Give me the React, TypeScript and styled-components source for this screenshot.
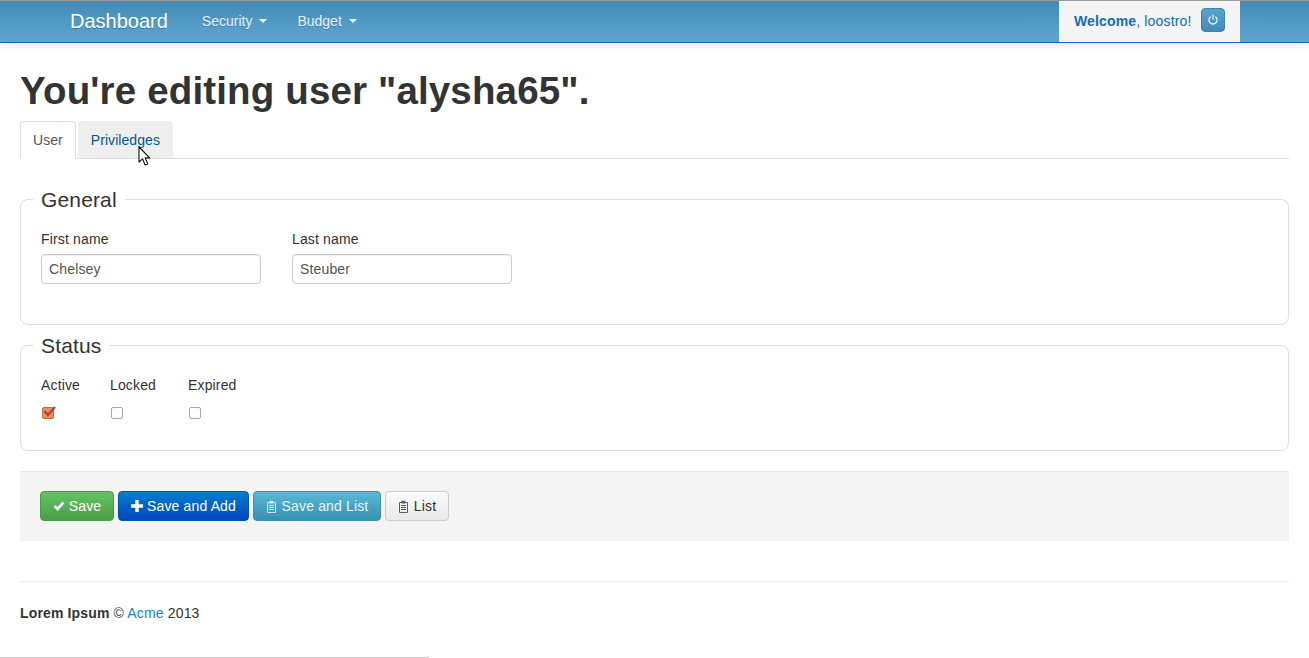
import React from "react";
import styled, { createGlobalStyle } from "styled-components";

const Global = createGlobalStyle`
  html, body { margin: 0; padding: 0; background: #fff; }
  body { font-family: "Liberation Sans", Arial, sans-serif; font-size: 14px; line-height: 20px; color: #333; overflow: hidden; letter-spacing: 0.15px; }
  * { box-sizing: border-box; }
`;

const Page = styled.div`
  position: relative;
  width: 1309px;
  height: 658px;
  overflow: hidden;
`;

const Navbar = styled.nav`
  height: 43px;
  display: flex;
  align-items: stretch;
  background: linear-gradient(to bottom, #428bb7 0%, #5fa5d1 100%);
  border-top: 1px solid #999;
  border-bottom: 1px solid #0f6cbf;
  box-shadow: 0 3px 9px rgba(0, 0, 0, 0.07);
  padding-left: 70px;
`;

const Brand = styled.a`
  font-size: 20px;
  letter-spacing: 0;
  line-height: 41px;
  color: #fff;
  text-shadow: 0 1px 0 rgba(0, 0, 0, 0.25);
  margin-right: 19px;
`;

const NavItem = styled.a`
  display: flex;
  align-items: center;
  gap: 7px;
  padding: 0 15px 2px;
  letter-spacing: 0;
  color: #e9f1f7;
  font-size: 14px;
  text-shadow: 0 1px 0 rgba(0, 0, 0, 0.2);
`;

const Caret = styled.span`
  width: 0;
  height: 0;
  border-top: 4px solid #fff;
  border-left: 4px solid transparent;
  border-right: 4px solid transparent;
  margin-top: 1px;
`;

const UserBox = styled.div`
  margin-left: auto;
  margin-right: 69px;
  width: 181px;
  background: #f4f4f4;
  display: flex;
  align-items: center;
  padding: 0 0 2px 15px;
  color: #0f6cbf;
  font-size: 14px;
  gap: 10px;
`;

const PowerButton = styled.button`
  width: 24px;
  height: 24px;
  padding: 0;
  margin-bottom: 1px;
  display: flex;
  align-items: center;
  justify-content: center;
  border: 1px solid #3f80ac;
  border-radius: 4px;
  background: linear-gradient(to bottom, #5ba3cf, #428bb7);
`;

const Content = styled.main`
  padding: 0 20px;
`;

const Title = styled.h1`
  margin: 25px 0 7px;
  font-size: 38.5px;
  line-height: 46px;
  font-weight: 700;
  color: #333;
`;

const Tabs = styled.div`
  display: flex;
  gap: 2px;
  height: 38px;
  border-bottom: 1px solid #ddd;
`;

const Tab = styled.a<{ $active?: boolean }>`
  height: 38px;
  padding: 8px 12px 0;
  border: 1px solid ${(p) => (p.$active ? "#ddd" : "#eee")};
  border-bottom: 1px solid ${(p) => (p.$active ? "#fff" : "#ddd")};
  border-radius: 4px 4px 0 0;
  background: ${(p) => (p.$active ? "#fff" : "#eee")};
  color: ${(p) => (p.$active ? "#555" : "#00598f")};
  font-size: 14px;
  letter-spacing: 0.06px;
`;

const Fieldset = styled.fieldset<{ $height: number; $top: number }>`
  margin: ${(p) => p.$top}px 0 0;
  padding: 0 20px;
  height: ${(p) => p.$height}px;
  border: 1px solid #ddd;
  border-radius: 8px;
  min-width: 0;
`;

const Legend = styled.legend`
  margin: 0 0 0 -8px;
  padding: 2px 8px 0;
  font-size: 21px;
  line-height: 30px;
  color: #333;
`;

const FieldRow = styled.div`
  display: flex;
  gap: 31px;
  padding-top: 14px;
`;

const StatusRow = styled.div`
  display: grid;
  grid-template-columns: 69px 78px auto;
  padding-top: 14px;
`;

const Field = styled.div`
  display: flex;
  flex-direction: column;
`;

const Label = styled.label`
  display: block;
  font-size: 14px;
  line-height: 20px;
  color: #333;
  margin-bottom: 5px;
`;

const TextInput = styled.input`
  width: 220px;
  height: 30px;
  padding: 0 7px;
  border: 1px solid #ccc;
  border-radius: 4px;
  font: 14px "Liberation Sans", Arial, sans-serif;
  letter-spacing: 0.15px;
  color: #555;
  background: #fff;
  box-shadow: inset 0 1px 1px rgba(0, 0, 0, 0.075);
`;

const CheckBox = styled.span<{ $checked?: boolean }>`
  position: relative;
  display: block;
  width: 12px;
  height: 12px;
  margin-top: 7px;
  margin-left: 1px;
  border: 1px solid ${(p) => (p.$checked ? "#c7663f" : "#a8a8a8")};
  border-radius: 2px;
  background: ${(p) => (p.$checked ? "#ee8d65" : "#fdfdfd")};
`;

const CheckMark = styled.svg`
  position: absolute;
  left: 0;
  top: -3px;
  overflow: visible;
`;

const Actions = styled.div`
  margin-top: 20px;
  height: 70px;
  display: flex;
  align-items: center;
  gap: 4px;
  padding: 0 0 1px 20px;
  background: #f4f4f4;
  border-top: 1px solid #e6e6e6;
`;

const colours = {
  success: { from: "#62c462", to: "#4a9f4a", border: "#4a9a4a", text: "#fff" },
  primary: { from: "#0080cc", to: "#0044c2", border: "#0052b0", text: "#fff" },
  info: { from: "#5bb8d6", to: "#3791b2", border: "#3a8fb0", text: "#e8f5f9" },
  plain: { from: "#fbfbfb", to: "#e9e9e9", border: "#ccc", text: "#333" },
};

const Button = styled.button<{ $kind: keyof typeof colours; $width: number }>`
  width: ${(p) => p.$width}px;
  height: 30px;
  padding: 0;
  display: flex;
  align-items: center;
  justify-content: center;
  gap: 4px;
  border: 1px solid ${(p) => colours[p.$kind].border};
  border-radius: 4px;
  background: linear-gradient(to bottom, ${(p) => colours[p.$kind].from}, ${(p) => colours[p.$kind].to});
  color: ${(p) => colours[p.$kind].text};
  font: 14px "Liberation Sans", Arial, sans-serif;
  letter-spacing: 0.15px;
`;

const Rule = styled.hr`
  margin: 40px 0 0;
  border: 0;
  border-top: 1px solid #eee;
`;

const Footer = styled.footer`
  margin-top: 21px;
  font-size: 14px;
  line-height: 20px;
  color: #333;
`;

const Link = styled.a`
  color: #0f85d8;
`;

const StatusLine = styled.div`
  position: absolute;
  left: 0;
  bottom: 0;
  width: 429px;
  height: 1px;
  background: #c8c8c8;
`;

const Cursor = styled.svg`
  position: absolute;
  left: 138px;
  top: 146px;
`;

const ClipboardSvg = styled.svg`
  margin-right: 1px;
`;

const ClipboardIcon = ({ color }: { color: string }) => (
  <ClipboardSvg width="11" height="13" viewBox="0 0 11 13" fill="none">
    <path d="M1.5 2.5h8v10h-8z" stroke={color} strokeWidth="1" />
    <path d="M3.5 .8h4v2.7h-4z" fill={color} />
    <path d="M3 5.5h5M3 7.5h5M3 9.5h5" stroke={color} strokeWidth="1" />
  </ClipboardSvg>
);

const CheckIcon = () => (
  <svg width="12" height="10" viewBox="0 0 12 10" fill="none">
    <path d="M1.5 5l3 3 6-6.5" stroke="#fff" strokeWidth="2.6" />
  </svg>
);

const PlusIcon = () => (
  <svg width="12" height="12" viewBox="0 0 12 12">
    <path d="M4.3 0h3.4v4.3H12v3.4H7.7V12H4.3V7.7H0V4.3h4.3z" fill="#fff" />
  </svg>
);

export default function App() {
  return (
    <Page>
      <Global />
      <Navbar>
        <Brand>Dashboard</Brand>
        <NavItem>Security <Caret /></NavItem>
        <NavItem>Budget <Caret /></NavItem>
        <UserBox>
          <span><b>Welcome</b>, loostro!</span>
          <PowerButton aria-label="Log out">
            <svg width="12" height="12" viewBox="0 0 12 12" fill="none">
              <path d="M3.6 2.6a4.1 4.1 0 1 0 4.8 0" stroke="#e6f1f8" strokeWidth="1.3" />
              <path d="M6 .8v4.6" stroke="#e6f1f8" strokeWidth="1.3" />
            </svg>
          </PowerButton>
        </UserBox>
      </Navbar>
      <Content>
        <Title>You're editing user "alysha65".</Title>
        <Tabs>
          <Tab $active>User</Tab>
          <Tab>Priviledges</Tab>
        </Tabs>
        <Fieldset $top={24} $height={142}>
          <Legend>General</Legend>
          <FieldRow>
            <Field>
              <Label>First name</Label>
              <TextInput defaultValue="Chelsey" />
            </Field>
            <Field>
              <Label>Last name</Label>
              <TextInput defaultValue="Steuber" />
            </Field>
          </FieldRow>
        </Fieldset>
        <Fieldset $top={4} $height={122}>
          <Legend>Status</Legend>
          <StatusRow>
            <Field>
              <Label>Active</Label>
              <CheckBox $checked>
                <CheckMark width="14" height="13" viewBox="0 0 14 13" fill="none">
                  <path d="M1.5 6l3.5 4 7-8" stroke="#a9472a" strokeWidth="2.2" />
                </CheckMark>
              </CheckBox>
            </Field>
            <Field>
              <Label>Locked</Label>
              <CheckBox />
            </Field>
            <Field>
              <Label>Expired</Label>
              <CheckBox />
            </Field>
          </StatusRow>
        </Fieldset>
        <Actions>
          <Button $kind="success" $width={74}><CheckIcon />Save</Button>
          <Button $kind="primary" $width={131}><PlusIcon />Save and Add</Button>
          <Button $kind="info" $width={128}><ClipboardIcon color="#cfe9f2" />Save and List</Button>
          <Button $kind="plain" $width={64}><ClipboardIcon color="#555a66" />List</Button>
        </Actions>
        <Rule />
        <Footer><b>Lorem Ipsum</b> © <Link>Acme</Link> 2013</Footer>
      </Content>
      <Cursor width="14" height="21" viewBox="0 0 14 21">
        <path d="M1 1v15l3.5-3.2 2.6 6.2 2.6-1.1-2.6-6h4.6z" fill="#fff" stroke="#111" strokeWidth="1.1" strokeLinejoin="round" />
      </Cursor>
      <StatusLine />
    </Page>
  );
}
